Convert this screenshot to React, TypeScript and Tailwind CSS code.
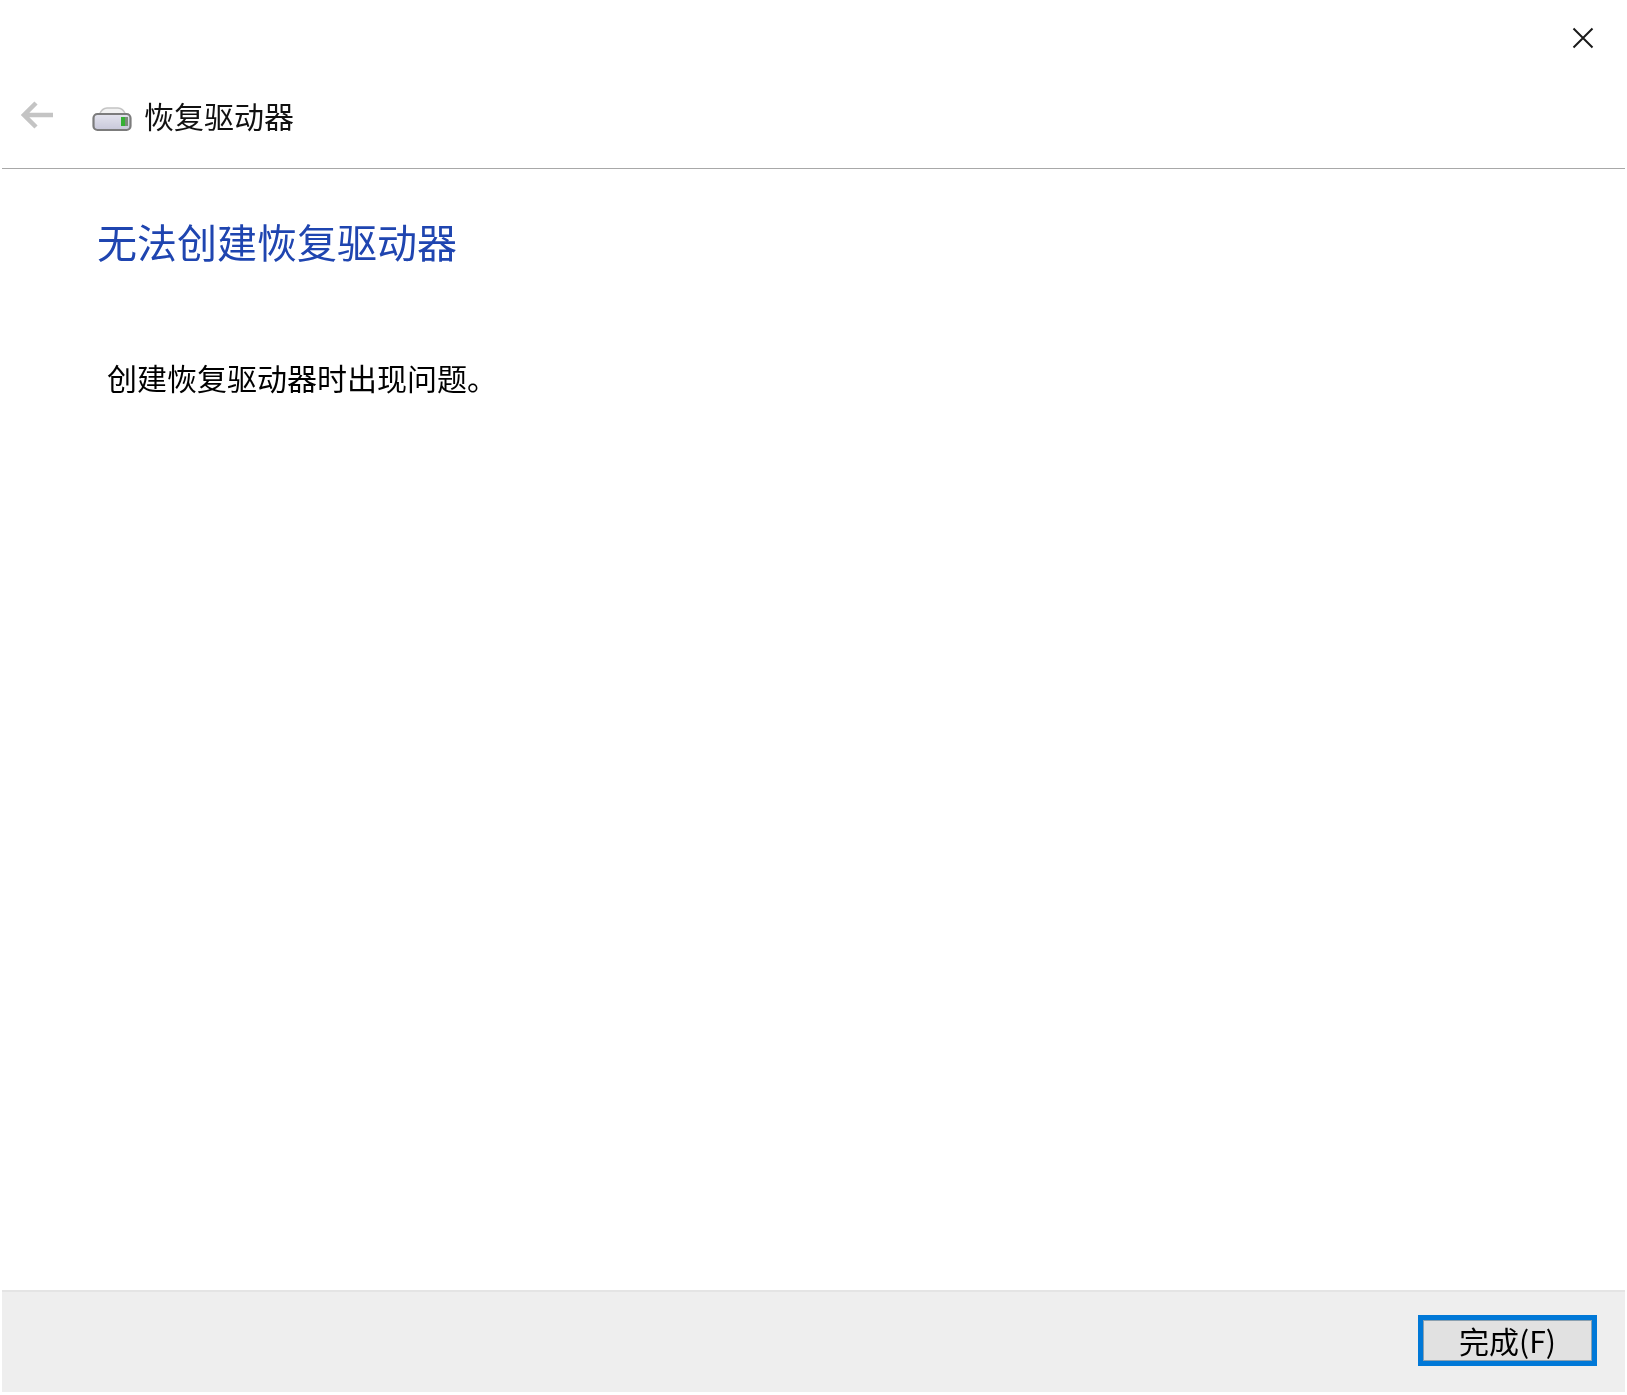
import React from "react";

const font = "font-['Noto_Sans_CJK_SC','Noto_Sans',sans-serif]";

function DriveIcon() {
  return (
    <svg width="42" height="28" viewBox="0 0 42 28" className="shrink-0">
      <defs>
        <linearGradient id="drv" x1="0" y1="0" x2="0" y2="1">
          <stop offset="0" stopColor="#e4e4ee" />
          <stop offset="1" stopColor="#c8c8da" />
        </linearGradient>
      </defs>
      <path d="M8 11 Q11 4 16 4 H27 Q32 4 35 11 Z" fill="#f2f2f2" stroke="#c4c4c4" strokeWidth="1.4" />
      <rect x="2.5" y="10" width="37" height="16" rx="4" fill="url(#drv)" stroke="#7c7c7c" strokeWidth="2.2" />
      <rect x="30" y="13" width="4" height="9" fill="#35b034" />
      <rect x="34" y="13" width="3" height="9" fill="#7c8a7a" />
    </svg>
  );
}

export default function App() {
  return (
    <div className={`${font} flex flex-col w-[1627px] h-[1395px] bg-white overflow-hidden`}>
      <div className="flex justify-end h-[77px] shrink-0 pt-[27px] pr-[33px]">
        <svg width="22" height="22" viewBox="0 0 22 22" fill="none" stroke="#1a1a1a" strokeWidth="2">
          <path d="M1.5 1.5 L20.5 20.5 M20.5 1.5 L1.5 20.5" />
        </svg>
      </div>
      <div className="flex items-center h-[92px] shrink-0 mx-[2px] border-b border-[#a8a8a8] pb-[16px]">
        <svg width="33" height="30" viewBox="0 0 33 30" fill="none" stroke="#c4c4c4" strokeWidth="4.5" className="ml-[19px] blur-[0.6px]">
          <path d="M2 15 H32 M15 3 L3 15 L15 27" />
        </svg>
        <div className="ml-[37px] mt-[6px] blur-[0.6px]"><DriveIcon /></div>
        <span className="ml-[11px] text-[30px] leading-[40px] text-[#111111] blur-[0.7px]">恢复驱动器</span>
      </div>
      <div className="flex-1 flex flex-col pl-[97px]">
        <h1 className="mt-[44px] text-[40px] leading-[56px] text-[#1f45b0] font-normal blur-[0.5px]">无法创建恢复驱动器</h1>
        <p className="mt-[87px] ml-[10px] text-[30px] leading-[42px] text-[#000000] blur-[0.5px]">创建恢复驱动器时出现问题。</p>
      </div>
      <div className="flex items-center justify-end h-[102px] shrink-0 mx-[2px] mb-[3px] bg-[#eeeeee] border-t-2 border-[#e4e4e4] pr-[28px] pb-[3px]">
        <button className="flex items-center justify-center w-[179px] h-[51px] pb-[2px] border-[5px] border-[#0078d7] bg-[#e1e1e1] outline outline-1 -outline-offset-[6px] outline-[#8aa0b0] text-[30px] leading-[40px] text-[#000000]">
          <span className="blur-[0.5px]">完成(F)</span>
        </button>
      </div>
    </div>
  );
}
